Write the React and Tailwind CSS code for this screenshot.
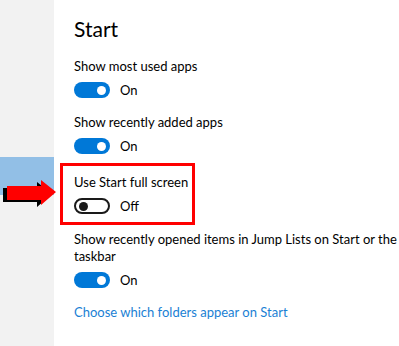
import React from 'react';

const font = { fontFamily: 'Lato, "Noto Sans", sans-serif' };

const Toggle = ({ on }) =>
  on ? (
    <div className="flex items-center gap-[10px] h-[16px]">
      <div className="w-[36px] h-[16px] rounded-full bg-[#0078d7] flex items-center justify-end pr-[4px]">
        <div className="w-[9px] h-[9px] rounded-full bg-white" />
      </div>
      <span className="text-[13px] leading-[16px] text-black">On</span>
    </div>
  ) : (
    <div className="flex items-center gap-[10px] h-[16px]">
      <div className="w-[36px] h-[16px] rounded-full border-2 border-[#1a1a1a] bg-white flex items-center pl-[3px]">
        <div className="w-[9px] h-[9px] rounded-full bg-[#1a1a1a]" />
      </div>
      <span className="text-[13px] leading-[16px] text-black">Off</span>
    </div>
  );

const Setting = ({ label, on, className = '' }) => (
  <div className={`flex flex-col gap-[7px] ${className}`}>
    <p className="text-[13px] leading-[17px] text-black whitespace-nowrap">{label}</p>
    <Toggle on={on} />
  </div>
);

const Arrow = () => (
  <svg className="absolute left-0 top-[176px]" width="60" height="32" viewBox="0 0 60 32">
    <polygon points="3,12 37,12 37,6 52,18 37,31 37,26 3,26" fill="#000" />
    <polygon points="7,10 41,10 41,4 56,16 41,29 41,24 7,24" fill="#f00" />
  </svg>
);

export default function App() {
  return (
    <div className="relative flex w-[399px] h-[346px] bg-white overflow-hidden" style={font}>
      <aside className="w-[54px] shrink-0 bg-[#f2f2f2] flex flex-col">
        <div className="h-[157px]" />
        <div className="h-[38px] bg-[#92bfe6]" />
      </aside>

      <main className="flex-1 pl-[20px] pt-[15px]">
        <h1 className="text-[21px] leading-[28px] text-black">Start</h1>
        <Setting className="mt-[15px]" label="Show most used apps" on />
        <Setting className="mt-[16px]" label="Show recently added apps" on />
        <div className="mt-[9px] -ml-[14px] w-[135px] border-[3px] border-[#f00] pl-[11px] pt-[8px] pb-[8px]">
          <Setting label="Use Start full screen" on={false} />
        </div>
        <div className="mt-[6px] flex flex-col gap-[7px]">
          <p className="text-[13px] leading-[17px] text-black w-[325px]">
            Show recently opened items in Jump Lists on Start or the taskbar
          </p>
          <Toggle on />
        </div>
        <a className="block mt-[16px] text-[13px] leading-[17px] text-[#1a7fd4]">Choose which folders appear on Start</a>
      </main>

      <Arrow />
    </div>
  );
}
